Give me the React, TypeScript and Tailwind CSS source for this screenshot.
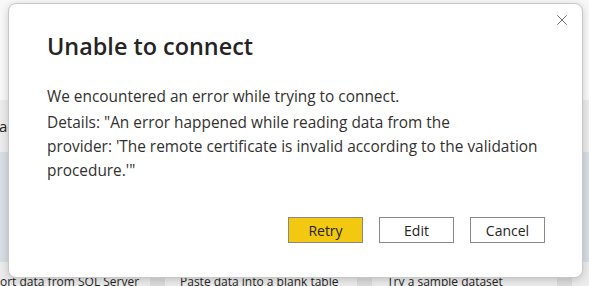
import { X } from "lucide-react";

const font = { fontFamily: '"Open Sans", "Noto Sans", sans-serif' };

function Backdrop() {
  // the Power BI start page that sits behind the dialog
  return (
    <div className="flex h-[286px] w-[589px] flex-col overflow-hidden bg-[#f3f3f3]">
      <div className="h-[100px] bg-[#f8f8f8]" />
      <div className="flex h-[52px] items-center bg-[#ececec] text-[15px] text-[#252423]">
        <span className="-ml-[1px]">ac</span>
      </div>
      <div className="h-[110px] bg-[#d9dde5]" />
      <div className="flex h-[24px] bg-[#ececec] pt-[12px] text-[12px] leading-[16px] text-[#252423]">
        <div className="w-[150px] shrink-0 whitespace-nowrap">ort data from SQL Server</div>
        <div className="w-[15px] shrink-0 bg-[#dcdcdc]" />
        <div className="w-[192px] shrink-0 whitespace-nowrap pl-[15px]">Paste data into a blank table</div>
        <div className="w-[15px] shrink-0 bg-[#dcdcdc]" />
        <div className="w-[185px] shrink-0 whitespace-nowrap pl-[15px]">Try a sample dataset</div>
        <div className="w-[15px] shrink-0 bg-[#dcdcdc]" />
      </div>
    </div>
  );
}

export default function App() {
  return (
    <div className="relative h-[286px] w-[589px] overflow-hidden" style={font}>
      <Backdrop />

      {/* Dialog */}
      <div className="absolute left-[8px] top-[3px] flex h-[275px] w-[575px] flex-col rounded-[8px] border border-[#c8c8c8] bg-white pl-[38px] pr-[37px] shadow-[0_2px_8px_rgba(0,0,0,0.18)]">
        <button className="absolute right-[11px] top-[7px] text-[#605e5c]">
          <X size={18} strokeWidth={1.2} />
        </button>

        <h1 className="mt-[26px] text-[23.4px] font-semibold leading-[32px] text-[#252423]">
          Unable to connect
        </h1>

        <div className="mt-[23px] text-[15.4px] leading-[24px] text-[#323130]">
          <p className="mb-[2px]">We encountered an error while trying to connect.</p>
          <p>
            <span className="block">Details: "An error happened while reading data from the</span>
            <span className="block">provider: 'The remote certificate is invalid according to the validation</span>
            <span className="block">procedure.'"</span>
          </p>
        </div>

        <div className="mt-auto mb-[34px] flex justify-end gap-[16px] text-[14px] text-[#252423]">
          <button className="h-[26px] w-[75px] border border-[#8a8886] bg-[#f2c811]">Retry</button>
          <button className="h-[26px] w-[75px] border border-[#8a8886] bg-white">Edit</button>
          <button className="h-[26px] w-[75px] border border-[#8a8886] bg-white">Cancel</button>
        </div>
      </div>
    </div>
  );
}
